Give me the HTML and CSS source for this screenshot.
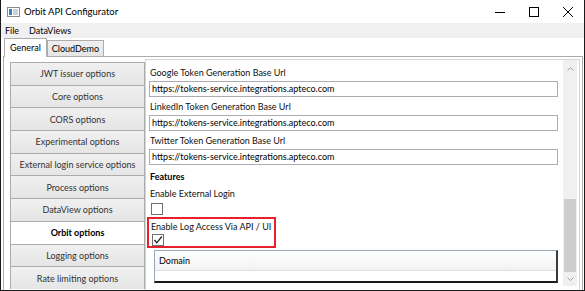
FILE: index.html
```html
<!DOCTYPE html>
<html>
    <head>
        <title>Orbit API Configurator</title>
        <link rel="stylesheet" href="styles.css">
    </head>
    <body>
        <div class="window">
            <div class="titlebar">
                <svg class="appicon" width="13" height="10" viewBox="0 0 13 10">
                    <rect x="0.5" y="0.5" width="12" height="9" fill="#fff" stroke="#8a8a8a"/>
                    <rect x="2" y="2" width="3" height="6" fill="#3b7fc4"/>
                    <rect x="6" y="2" width="5" height="6" fill="#c9d3dd"/>
                </svg>
                <span class="title">Orbit API Configurator</span>
                <div class="controls">
                    <svg width="12" height="12" viewBox="0 0 12 12"><line x1="1" y1="6.5" x2="11" y2="6.5" stroke="#000"/></svg>
                    <svg width="12" height="12" viewBox="0 0 12 12"><rect x="1.5" y="1.5" width="9" height="9" fill="none" stroke="#000"/></svg>
                    <svg width="12" height="12" viewBox="0 0 12 12"><path d="M1 1 L11 11 M11 1 L1 11" stroke="#000"/></svg>
                </div>
            </div>
            <div class="menubar">
                <span>File</span>
                <span>DataViews</span>
            </div>
            <div class="tabs">
                <div class="tab active">General</div>
                <div class="tab">CloudDemo</div>
            </div>
            <div class="tabpanel">
                <div class="navlist">
                    <div class="navbtn">JWT issuer options</div>
                    <div class="navbtn">Core options</div>
                    <div class="navbtn">CORS options</div>
                    <div class="navbtn">Experimental options</div>
                    <div class="navbtn">External login service options</div>
                    <div class="navbtn">Process options</div>
                    <div class="navbtn">DataView options</div>
                    <div class="navbtn selected">Orbit options</div>
                    <div class="navbtn">Logging options</div>
                    <div class="navbtn">Rate limiting options</div>
                </div>
                <div class="settings">
                    <div class="form">
                        <div class="label">Google Token Generation Base Url</div>
                        <div class="textbox">https://tokens-service.integrations.apteco.com</div>
                        <div class="label">LinkedIn Token Generation Base Url</div>
                        <div class="textbox">https://tokens-service.integrations.apteco.com</div>
                        <div class="label">Twitter Token Generation Base Url</div>
                        <div class="textbox">https://tokens-service.integrations.apteco.com</div>
                        <div class="heading">Features</div>
                        <div class="label">Enable External Login</div>
                        <div class="checkbox"></div>
                        <div class="highlight">
                            <div class="label">Enable Log Access Via API / UI</div>
                            <div class="checkbox">
                                <svg width="10" height="10" viewBox="0 0 10 10"><path d="M1.5 5 L3.8 7.8 L8.8 1.5" fill="none" stroke="#222" stroke-width="1.3"/></svg>
                            </div>
                        </div>
                        <div class="grid">
                            <div class="gridhead">Domain</div>
                        </div>
                    </div>
                    <div class="scrollbar">
                        <svg class="arrow" width="7" height="4" viewBox="0 0 7 4"><path d="M0.5 3.5 L3.5 0.5 L6.5 3.5" fill="none" stroke="#a0a0a0"/></svg>
                        <div class="track"><div class="thumb"></div></div>
                        <svg class="arrow" width="7" height="4" viewBox="0 0 7 4"><path d="M0.5 0.5 L3.5 3.5 L6.5 0.5" fill="none" stroke="#a0a0a0"/></svg>
                    </div>
                </div>
            </div>
        </div>
    </body>
</html>
```
FILE: styles.css
```css
/* Window chrome and tab panel for the configurator */
body {
    margin: 0;
    background-color: #fff;
    font-family: 'Lato', 'Noto Sans', sans-serif;
    font-size: 9px;
    color: #000;
}

.window {
    width: 583px;
    height: 290px;
    border-left: 1px solid #1a1a1a;
    border-right: 1px solid #1a1a1a;
    border-bottom: 1px solid #1a1a1a;
    display: flex;
    flex-direction: column;
    overflow: hidden;
}

.titlebar {
    height: 23px;
    display: flex;
    align-items: center;
    padding-left: 6px;
}

.appicon {
    margin-right: 4px;
}

.title {
    font-size: 9.5px;
}

.controls {
    margin-left: auto;
    display: flex;
    gap: 22px;
    padding-right: 10px;
}

.menubar {
    height: 15px;
    background-color: #f0f0f0;
    display: flex;
    align-items: center;
    gap: 10px;
    padding-left: 4px;
}

.tabs {
    height: 18px;
    display: flex;
    align-items: flex-end;
    padding-left: 3px;
}

.tab {
    height: 15px;
    line-height: 15px;
    padding: 0 4px;
    border: 1px solid #acacac;
    border-bottom: none;
    background: linear-gradient(#f0f0f0, #e5e5e5);
}

.tab.active {
    height: 18px;
    line-height: 18px;
    background: #fff;
    margin-bottom: -1px;
    position: relative;
    z-index: 1;
    padding: 0 5px;
}

.tabpanel {
    flex: 1;
    margin: 0 1px 0 2px;
    border: 1px solid #acacac;
    border-bottom: none;
    display: flex;
    padding: 2px 2px 0 6px;
    min-height: 0;
}

.navlist {
    width: 135px;
    margin-top: 3px;
    display: flex;
    flex-direction: column;
}

.navbtn {
    height: 21.7px;
    flex-shrink: 0;
    border: 1px solid #acacac;
    border-bottom: none;
    background: linear-gradient(#f0f0f0, #e5e5e5);
    color: #333;
    display: flex;
    align-items: center;
    justify-content: center;
    white-space: nowrap;
}

.navbtn.selected {
    background: #fff;
    font-weight: bold;
    color: #000;
}

.settings {
    flex: 1;
    border: 1px solid #d5d5d5;
    border-bottom: none;
    display: flex;
    min-width: 0;
}

.form {
    flex: 1;
    padding: 4px 3px 0 3px;
    display: flex;
    flex-direction: column;
    min-width: 0;
}

.label {
    height: 17px;
    line-height: 17px;
    padding-left: 1px;
    white-space: nowrap;
    color: #111;
}

.heading {
    height: 17px;
    line-height: 17px;
    font-weight: bold;
    padding-left: 1px;
    margin-top: 2px;
}

.textbox {
    height: 14px;
    line-height: 14px;
    border: 1px solid #abadb3;
    padding-left: 2px;
    margin-bottom: 1px;
    white-space: nowrap;
    overflow: hidden;
}

.checkbox {
    width: 10px;
    height: 10px;
    border: 1px solid #707070;
    margin: 1px 0 2px 2px;
    background: #fff;
    display: flex;
    align-items: center;
    justify-content: center;
}

.highlight {
    width: 124px;
    border: 2px solid #e8202a;
    margin-left: -2px;
    padding: 0 0 0 1px;
}

.highlight .label {
    height: 15px;
    line-height: 15px;
}

.highlight .checkbox {
    margin: 0 0 0 2px;
}

.grid {
    margin: 2px 0 0 5px;
    height: 30px;
    border: 1px solid #9aa8b8;
    border-bottom: 2px solid #1a1a1a;
    border-right: 2px solid #3a3a3a;
}

.gridhead {
    height: 19px;
    line-height: 19px;
    padding-left: 4px;
    background: linear-gradient(#ffffff, #f2f2f2);
    border-bottom: 1px solid #e0e0e0;
}

.scrollbar {
    width: 14px;
    background-color: #f0f0f0;
    margin: 0 2px 4px 2px;
    display: flex;
    flex-direction: column;
    align-items: center;
    padding: 7px 0 5px;
}

.track {
    flex: 1;
    width: 100%;
    display: flex;
    flex-direction: column;
    justify-content: flex-end;
    padding: 5px 0;
}

.thumb {
    height: 73px;
    margin: 0 1px;
    background-color: #cdcdcd;
}
```
